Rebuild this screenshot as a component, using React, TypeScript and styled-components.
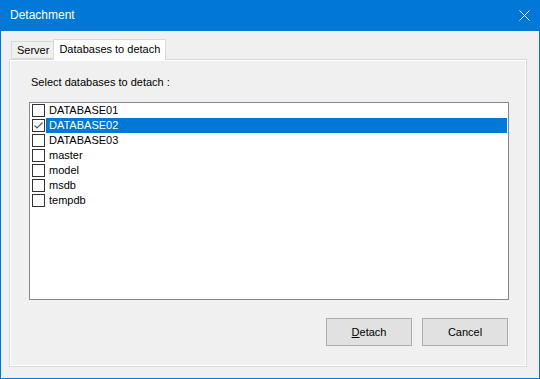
import React, { useState } from 'react'
import styled, { createGlobalStyle } from 'styled-components'

const GlobalStyle = createGlobalStyle`
  html, body {
    margin: 0;
    padding: 0;
    background: #f0f0f0;
  }
  * {
    box-sizing: border-box;
  }
`

const databases = [
  'DATABASE01',
  'DATABASE02',
  'DATABASE03',
  'master',
  'model',
  'msdb',
  'tempdb',
]

const CloseIcon = () => (
  <svg width="11" height="11" viewBox="0 0 11 11">
    <path d="M0.5 0.5 L10.5 10.5 M10.5 0.5 L0.5 10.5" stroke="#fff" strokeWidth="1" />
  </svg>
)

const CheckMark = () => (
  <svg width="11" height="11" viewBox="0 0 11 11">
    <polyline points="1.5,5.5 4,8 9.5,2.5" fill="none" stroke="#555" strokeWidth="1.2" />
  </svg>
)

export default function App() {
  const [checked, setChecked] = useState<string[]>(['DATABASE02'])
  const [selected, setSelected] = useState('DATABASE02')

  const toggle = (name: string) => {
    setSelected(name)
    setChecked((prev) =>
      prev.includes(name) ? prev.filter((n) => n !== name) : [...prev, name]
    )
  }

  return (
    <>
      <GlobalStyle />
      <Window>
        <TitleBar>
          <Title>Detachment</Title>
          <CloseButton>
            <CloseIcon />
          </CloseButton>
        </TitleBar>
        <Client>
          <TabStrip>
            <Tab>Server</Tab>
            <Tab active>Databases to detach</Tab>
          </TabStrip>
          <TabPage>
            <Label>Select databases to detach :</Label>
            <ListBox>
              {databases.map((name) => (
                <Item key={name} onClick={() => toggle(name)}>
                  <Box>{checked.includes(name) && <CheckMark />}</Box>
                  <ItemText selected={selected === name}>{name}</ItemText>
                </Item>
              ))}
            </ListBox>
            <Buttons>
              <Button>
                <U>D</U>etach
              </Button>
              <Button>Cancel</Button>
            </Buttons>
          </TabPage>
        </Client>
      </Window>
    </>
  )
}

const Window = styled.div`
  width: 540px;
  height: 379px;
  border: 1px solid #0078d7;
  border-top: none;
  background: #f0f0f0;
  display: flex;
  flex-direction: column;
  font-family: 'Liberation Sans', Arial, sans-serif;
  font-size: 11px;
  color: #000;
`

const TitleBar = styled.div`
  height: 31px;
  margin: 0 -1px;
  background: #0078d7;
  display: flex;
  align-items: center;
  justify-content: space-between;
  padding: 0 10px 0 10px;
`

const Title = styled.div`
  font-size: 12px;
  color: #fff;
  margin-top: -1px;
`

const CloseButton = styled.div`
  width: 11px;
  height: 11px;
  display: flex;
  margin-top: -1px;
`

const Client = styled.div`
  flex: 1;
  padding: 8px 12px 11px 8px;
  display: flex;
  flex-direction: column;
`

const TabStrip = styled.div`
  height: 20px;
  display: flex;
  align-items: flex-end;
  padding-left: 2px;
  position: relative;
  z-index: 1;
`

const Tab = styled.div<{ active?: boolean }>`
  height: ${(p) => (p.active ? '21px' : '18px')};
  margin-bottom: ${(p) => (p.active ? '-1px' : '0')};
  padding: ${(p) => (p.active ? '3px 5px 0 5px' : '2px 4px 0 5px')};
  border: 1px solid #d9d9d9;
  border-bottom: ${(p) => (p.active ? 'none' : '1px solid #d9d9d9')};
  border-right: ${(p) => (p.active ? '1px solid #d9d9d9' : 'none')};
  background: ${(p) => (p.active ? '#fff' : '#f0f0f0')};
  white-space: nowrap;
`

const TabPage = styled.div`
  flex: 1;
  border: 1px solid #d9d9d9;
  box-shadow: inset 0 0 0 1px #fff;
  padding: 16px 17px 0 20px;
  display: flex;
  flex-direction: column;
`

const Label = styled.div`
  line-height: 13px;
  margin-left: 1px;
`

const ListBox = styled.div`
  margin-top: 13px;
  margin-left: -1px;
  width: 480px;
  height: 198px;
  border: 1px solid #828790;
  background: #fff;
  padding: 0 1px 0 2px;
`

const Item = styled.div`
  height: 15px;
  display: flex;
  align-items: center;
  cursor: default;
`

const Box = styled.div`
  width: 13px;
  height: 13px;
  border: 1px solid #333;
  background: #fff;
  display: flex;
  align-items: center;
  justify-content: center;
  flex-shrink: 0;
`

const ItemText = styled.div<{ selected?: boolean }>`
  flex: 1;
  height: 15px;
  line-height: 15px;
  margin-left: 1px;
  padding-left: 3px;
  background: ${(p) => (p.selected ? '#0078d7' : 'transparent')};
  color: ${(p) => (p.selected ? '#fff' : '#000')};
`

const Buttons = styled.div`
  display: flex;
  justify-content: flex-end;
  gap: 10px;
  margin-top: 18px;
  width: 478px;
`

const Button = styled.div`
  width: 86px;
  height: 28px;
  border: 1px solid #adadad;
  background: #e1e1e1;
  display: flex;
  align-items: center;
  justify-content: center;
`

const U = styled.span`
  text-decoration: underline;
`
